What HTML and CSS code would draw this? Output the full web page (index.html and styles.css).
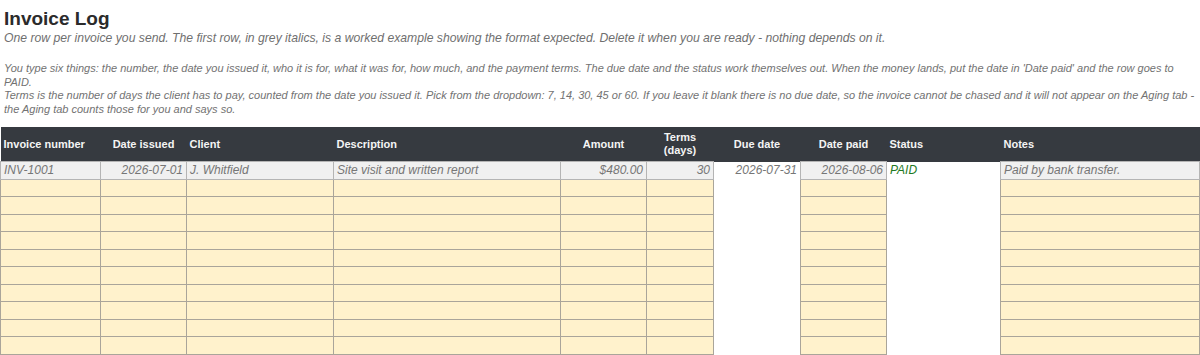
FILE: index.html
```html
<!DOCTYPE html>
<html lang="en">
<head>
<meta charset="utf-8">
<title>Invoice Log</title>
<link rel="stylesheet" href="styles.css">
</head>
<body>
<header class="intro">
  <h1 class="title">Invoice Log</h1>
  <p class="subtitle">One row per invoice you send. The first row, in grey italics, is a worked example showing the format expected. Delete it when you are ready - nothing depends on it.</p>
  <div class="notes-text">
    <p>You type six things: the number, the date you issued it, who it is for, what it was for, how much, and the payment terms. The due date and the status work themselves out. When the money lands, put the date in 'Date paid' and the row goes to PAID.</p>
    <p>Terms is the number of days the client has to pay, counted from the date you issued it. Pick from the dropdown: 7, 14, 30, 45 or 60. If you leave it blank there is no due date, so the invoice cannot be chased and it will not appear on the Aging tab - the Aging tab counts those for you and says so.</p>
  </div>
</header>
<table class="log">
  <colgroup>
    <col class="c-num"><col class="c-issued"><col class="c-client"><col class="c-desc"><col class="c-amt"><col class="c-terms"><col class="c-due"><col class="c-paid"><col class="c-status"><col class="c-notes">
  </colgroup>
  <thead>
    <tr>
      <th class="left">Invoice number</th>
      <th>Date issued</th>
      <th class="left">Client</th>
      <th class="left">Description</th>
      <th>Amount</th>
      <th>Terms<br>(days)</th>
      <th>Due date</th>
      <th>Date paid</th>
      <th class="left">Status</th>
      <th class="left">Notes</th>
    </tr>
  </thead>
  <tbody>
    <tr class="example">
      <td class="in">INV-1001</td>
      <td class="in r">2026-07-01</td>
      <td class="in">J. Whitfield</td>
      <td class="in">Site visit and written report</td>
      <td class="in r">$480.00</td>
      <td class="in r">30</td>
      <td class="calc r">2026-07-31</td>
      <td class="in r">2026-08-06</td>
      <td class="calc status-paid">PAID</td>
      <td class="in">Paid by bank transfer.</td>
    </tr>
    <tr><td class="in"></td><td class="in"></td><td class="in"></td><td class="in"></td><td class="in"></td><td class="in"></td><td class="calc"></td><td class="in"></td><td class="calc"></td><td class="in"></td></tr>
    <tr><td class="in"></td><td class="in"></td><td class="in"></td><td class="in"></td><td class="in"></td><td class="in"></td><td class="calc"></td><td class="in"></td><td class="calc"></td><td class="in"></td></tr>
    <tr><td class="in"></td><td class="in"></td><td class="in"></td><td class="in"></td><td class="in"></td><td class="in"></td><td class="calc"></td><td class="in"></td><td class="calc"></td><td class="in"></td></tr>
    <tr><td class="in"></td><td class="in"></td><td class="in"></td><td class="in"></td><td class="in"></td><td class="in"></td><td class="calc"></td><td class="in"></td><td class="calc"></td><td class="in"></td></tr>
    <tr><td class="in"></td><td class="in"></td><td class="in"></td><td class="in"></td><td class="in"></td><td class="in"></td><td class="calc"></td><td class="in"></td><td class="calc"></td><td class="in"></td></tr>
    <tr><td class="in"></td><td class="in"></td><td class="in"></td><td class="in"></td><td class="in"></td><td class="in"></td><td class="calc"></td><td class="in"></td><td class="calc"></td><td class="in"></td></tr>
    <tr><td class="in"></td><td class="in"></td><td class="in"></td><td class="in"></td><td class="in"></td><td class="in"></td><td class="calc"></td><td class="in"></td><td class="calc"></td><td class="in"></td></tr>
    <tr><td class="in"></td><td class="in"></td><td class="in"></td><td class="in"></td><td class="in"></td><td class="in"></td><td class="calc"></td><td class="in"></td><td class="calc"></td><td class="in"></td></tr>
    <tr><td class="in"></td><td class="in"></td><td class="in"></td><td class="in"></td><td class="in"></td><td class="in"></td><td class="calc"></td><td class="in"></td><td class="calc"></td><td class="in"></td></tr>
    <tr><td class="in"></td><td class="in"></td><td class="in"></td><td class="in"></td><td class="in"></td><td class="in"></td><td class="calc"></td><td class="in"></td><td class="calc"></td><td class="in"></td></tr>
  </tbody>
</table>
</body>
</html>
```
FILE: styles.css
```css
* { box-sizing: border-box; }
html, body { margin: 0; padding: 0; background: #ffffff; }
body {
  font-family: "Liberation Sans", Arial, sans-serif;
  color: #333;
  overflow: hidden;
}
.intro {
  padding: 8px 4px 0 4px;
  height: 127px;
}
.title {
  margin: 0;
  font-size: 19px;
  line-height: 22px;
  font-weight: bold;
  color: #2b2b2b;
}
.subtitle {
  margin: 0;
  padding-top: 1px;
  font-size: 12.2px;
  line-height: 14px;
  font-style: italic;
  color: #6f6f6f;
}
.notes-text {
  margin-top: 17px;
  width: 1194px;
}
.notes-text p {
  margin: 0;
  font-size: 11px;
  line-height: 13.5px;
  font-style: italic;
  color: #727272;
}
.log {
  border-collapse: collapse;
  table-layout: fixed;
  width: 1199px;
  font-size: 12px;
}
.c-num { width: 100px; }
.c-issued { width: 86px; }
.c-client { width: 147px; }
.c-desc { width: 227px; }
.c-amt { width: 86px; }
.c-terms { width: 67px; }
.c-due { width: 87px; }
.c-paid { width: 86px; }
.c-status { width: 114px; }
.c-notes { width: 199px; }
.log th {
  background: #363a40;
  color: #f4f4f4;
  font-size: 11px;
  font-weight: bold;
  line-height: 13px;
  height: 34.5px;
  padding: 0 3px;
  text-align: center;
  vertical-align: middle;
  border: none;
}
.log th.left { text-align: left; }
.log td {
  height: 17.5px;
  padding: 0 3px;
  line-height: 14px;
  vertical-align: middle;
  white-space: nowrap;
  overflow: hidden;
}
.log td.in {
  background: #fff2cc;
  border: 1px solid #aaa59a;
}
.log td.calc {
  background: #ffffff;
  border: none;
}
.log td.r { text-align: right; }
.log tr.example td {
  font-style: italic;
  color: #767676;
}
.log tr.example td.in {
  background: #f0f0f0;
  border-color: #b4b4b4;
}
.log tr.example td.status-paid {
  color: #1f7a1f;
}
```
